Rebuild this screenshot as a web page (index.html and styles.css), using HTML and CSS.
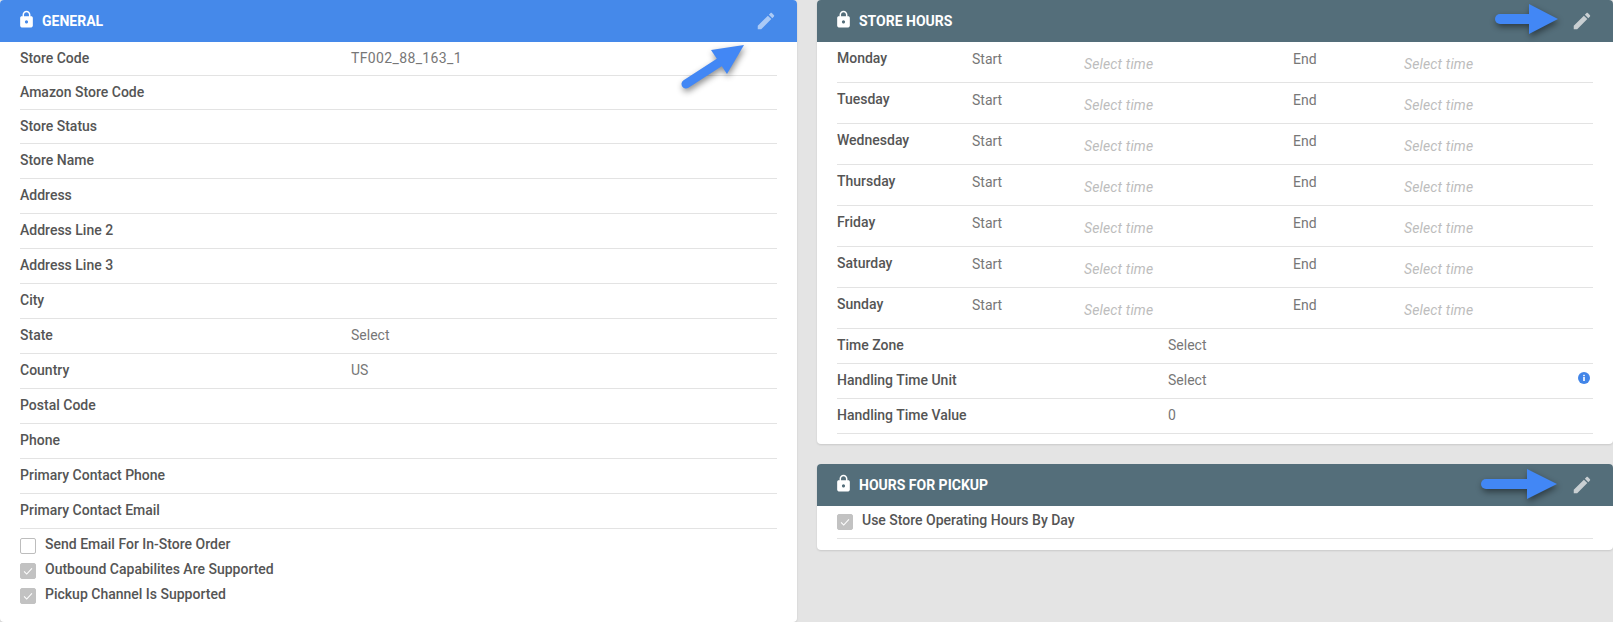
FILE: index.html
```html
<!DOCTYPE html>
<html lang="en">
<head>
<meta charset="utf-8">
<title>Store settings</title>
<link rel="stylesheet" href="styles.css">
</head>
<body>
<svg class="defs" width="0" height="0" aria-hidden="true">
  <defs>
    <symbol id="lock" viewBox="0 0 24 24"><path d="M18 8h-1V6c0-2.76-2.24-5-5-5S7 3.24 7 6v2H6c-1.1 0-2 .9-2 2v10c0 1.1.9 2 2 2h12c1.1 0 2-.9 2-2V10c0-1.1-.9-2-2-2zm-6 9c-1.1 0-2-.9-2-2s.9-2 2-2 2 .9 2 2-.9 2-2 2zm3.1-9H8.9V6c0-1.71 1.39-3.1 3.1-3.1 1.71 0 3.1 1.39 3.1 3.1v2z"/></symbol>
    <symbol id="pencil" viewBox="0 0 24 24"><path d="M3 17.25V21h3.75L17.81 9.94l-3.75-3.75L3 17.25zM20.71 7.04c.39-.39.39-1.02 0-1.41l-2.34-2.34c-.39-.39-1.02-.39-1.41 0l-1.83 1.83 3.75 3.75 1.83-1.83z"/></symbol>
    <symbol id="check" viewBox="0 0 16 16"><path d="M3.5 8.5l3 3 6-6.5" fill="none" stroke="#fff" stroke-width="1.2"/></symbol>
  </defs>
</svg>
<main class="page">
  <section class="card card-general">
    <header class="head head-blue">
      <svg class="ic-lock"><use href="#lock"/></svg>
      <h2 class="title">General</h2>
      <svg class="ic-pencil"><use href="#pencil"/></svg>
    </header>
    <div class="body">
      <div class="row r34"><span class="label">Store Code</span><span class="value code">TF002_88_163_1</span></div>
      <div class="row r34"><span class="label">Amazon Store Code</span></div>
      <div class="row r34"><span class="label">Store Status</span></div>
      <div class="row"><span class="label">Store Name</span></div>
      <div class="row"><span class="label">Address</span></div>
      <div class="row"><span class="label">Address Line 2</span></div>
      <div class="row"><span class="label">Address Line 3</span></div>
      <div class="row"><span class="label">City</span></div>
      <div class="row"><span class="label">State</span><span class="value">Select</span></div>
      <div class="row"><span class="label">Country</span><span class="value">US</span></div>
      <div class="row"><span class="label">Postal Code</span></div>
      <div class="row"><span class="label">Phone</span></div>
      <div class="row"><span class="label">Primary Contact Phone</span></div>
      <div class="row"><span class="label">Primary Contact Email</span></div>
      <div class="checks">
        <div class="check"><span class="box"></span><span class="label">Send Email For In-Store Order</span></div>
        <div class="check"><span class="box on"><svg class="ic-check"><use href="#check"/></svg></span><span class="label">Outbound Capabilites Are Supported</span></div>
        <div class="check"><span class="box on"><svg class="ic-check"><use href="#check"/></svg></span><span class="label">Pickup Channel Is Supported</span></div>
      </div>
    </div>
    <svg class="arrow arrow-diag" viewBox="0 0 80 60"><path d="M8 44L42 22" class="shaft slim"/><path d="M66 5L33 10 49 34z" class="tip"/></svg>
  </section>
  <div class="side">
    <section class="card">
      <header class="head head-slate">
        <svg class="ic-lock"><use href="#lock"/></svg>
        <h2 class="title">Store Hours</h2>
        <svg class="ic-pencil dim"><use href="#pencil"/></svg>
      </header>
      <div class="body">
        <div class="day"><span class="label">Monday</span><span class="tag">Start</span><span class="time">Select time</span><span class="tag">End</span><span class="time">Select time</span></div>
        <div class="day"><span class="label">Tuesday</span><span class="tag">Start</span><span class="time">Select time</span><span class="tag">End</span><span class="time">Select time</span></div>
        <div class="day"><span class="label">Wednesday</span><span class="tag">Start</span><span class="time">Select time</span><span class="tag">End</span><span class="time">Select time</span></div>
        <div class="day"><span class="label">Thursday</span><span class="tag">Start</span><span class="time">Select time</span><span class="tag">End</span><span class="time">Select time</span></div>
        <div class="day"><span class="label">Friday</span><span class="tag">Start</span><span class="time">Select time</span><span class="tag">End</span><span class="time">Select time</span></div>
        <div class="day"><span class="label">Saturday</span><span class="tag">Start</span><span class="time">Select time</span><span class="tag">End</span><span class="time">Select time</span></div>
        <div class="day"><span class="label">Sunday</span><span class="tag">Start</span><span class="time">Select time</span><span class="tag">End</span><span class="time">Select time</span></div>
        <div class="row wide"><span class="label">Time Zone</span><span class="value">Select</span></div>
        <div class="row wide"><span class="label">Handling Time Unit</span><span class="value">Select</span>
          <svg class="ic-info" viewBox="0 0 12 12"><circle cx="6" cy="6" r="6" fill="#4285e8"/><rect x="5.2" y="5" width="1.6" height="4" fill="#fff"/><rect x="5.2" y="2.8" width="1.6" height="1.4" fill="#fff"/></svg>
        </div>
        <div class="row wide"><span class="label">Handling Time Value</span><span class="value">0</span></div>
      </div>
      <svg class="arrow arrow-r arrow-r1" viewBox="0 0 70 40"><path d="M7 19H40" class="shaft"/><path d="M36 4L65 19 36 34z" class="tip"/></svg>
    </section>
    <section class="card">
      <header class="head head-slate">
        <svg class="ic-lock"><use href="#lock"/></svg>
        <h2 class="title">Hours For Pickup</h2>
        <svg class="ic-pencil dim"><use href="#pencil"/></svg>
      </header>
      <div class="body">
        <div class="check pickup"><span class="box on"><svg class="ic-check"><use href="#check"/></svg></span><span class="label">Use Store Operating Hours By Day</span></div>
      </div>
      <svg class="arrow arrow-r arrow-r2" viewBox="0 0 84 40"><path d="M8 20H52" class="shaft"/><path d="M49 5L79 20 49 35z" class="tip"/></svg>
    </section>
  </div>
</main>
</body>
</html>
```
FILE: styles.css
```css
* { box-sizing: border-box; }
html, body { margin: 0; height: 622px; overflow: hidden; }
body { background: #e4e4e4; font-family: Roboto, "Liberation Sans", sans-serif; font-size: 14px; color: #555; }
.defs { position: absolute; }
.page { display: grid; grid-template-columns: 797px 796px; column-gap: 20px; align-items: start; }
.side { display: flex; flex-direction: column; gap: 20px; }
.card { position: relative; background: #fff; border-radius: 4px; box-shadow: 0 1px 2px rgba(0,0,0,.12); }
.card-general { height: 622px; }
.head { display: flex; align-items: center; height: 42px; padding: 0 20px; border-radius: 4px 4px 0 0; color: #fff; }
.head-blue { background: #4589ea; }
.head-slate { background: #546e7a; }
.ic-lock { width: 19px; height: 19px; fill: #fff; margin-top: -4px; margin-left: -3px; flex: none; }
.title { flex: 1; margin: 0 0 0 6px; font-size: 14px; font-weight: 700; text-transform: uppercase; color: #fff; }
.ic-pencil { width: 22px; height: 22px; fill: rgba(255,255,255,.55); margin-top: -1px; flex: none; }
.ic-pencil.dim { fill: #c9cfd2; }
.body { padding: 0 20px; }
.row { position: relative; display: grid; grid-template-columns: 331px 1fr; align-items: start; height: 35px; padding-top: 8px; border-bottom: 1px solid #e3e3e3; line-height: 17px; }
.r34 { height: 34px; }
.label { font-weight: 500; color: #555; }
.value { color: #777; }
.code { letter-spacing: .36px; }
.day { display: grid; grid-template-columns: 135px 112px 209px 111px 1fr; align-items: start; height: 41px; padding-top: 8px; border-bottom: 1px solid #e3e3e3; line-height: 17px; }
.tag { color: #777; padding-top: 1px; }
.time { color: #bdbdbd; font-style: italic; padding-top: 6px; letter-spacing: .15px; }
.checks { display: flex; flex-direction: column; gap: 8px; padding-top: 7px; }
.check { display: flex; align-items: flex-start; gap: 9px; height: 17px; line-height: 17px; }
.box { width: 16px; height: 16px; margin-top: 2px; border: 1px solid #bdbdbd; border-radius: 2px; background: #fff; flex: none; display: block; }
.box.on { background: #c2c2c2; border-color: #c2c2c2; }
.ic-check { display: block; width: 14px; height: 14px; }
.check.pickup { height: 33px; padding-top: 6px; border-bottom: 1px solid #e3e3e3; }
.side .card:last-child .body { padding-bottom: 11px; }
.side .card:first-child .body { padding-bottom: 10px; }
.ic-info { position: absolute; right: 3px; top: 8px; width: 12px; height: 12px; }
.arrow { position: absolute; overflow: visible; filter: drop-shadow(1px 3px 3px rgba(0,0,0,.45)); }
.shaft { fill: none; stroke: #4287f5; stroke-width: 10; stroke-linecap: round; }
.shaft.slim { stroke-width: 9; }
.tip { fill: #4287f5; }
.arrow-diag { left: 678px; top: 40px; width: 80px; height: 60px; }
.arrow-r { width: 70px; height: 40px; }
.arrow-r1 { left: 676px; top: 0; }
.arrow-r2 { left: 661px; top: 0; width: 84px; }
```
